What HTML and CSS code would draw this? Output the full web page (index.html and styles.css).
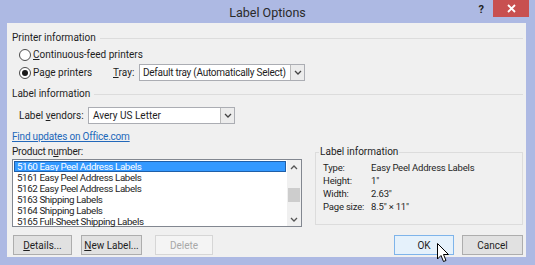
FILE: index.html
```html
<!DOCTYPE html>
<html>
<head>
<meta charset="utf-8">
<title>Label Options</title>
<link rel="stylesheet" href="styles.css">
</head>
<body>
<div class="window">
  <div class="titlebar">
    <div class="tb-side"></div>
    <div class="title">Label Options</div>
    <div class="tb-side tb-right">
      <span class="help">?</span>
      <span class="close"><svg width="9" height="9" viewBox="0 0 9 9"><path d="M1 1 L8 8 M8 1 L1 8" stroke="#fff" stroke-width="1.8" fill="none"/></svg></span>
    </div>
  </div>
  <div class="client">
    <div class="group-head"><span>Printer information</span><i class="rule"></i></div>
    <div class="radio-row r1"><span class="radio"></span><span><u>C</u>ontinuous-feed printers</span></div>
    <div class="radio-row r2">
      <span class="radio checked"></span><span class="page-lbl">Pa<u>g</u>e printers</span>
      <span class="tray-lbl"><u>T</u>ray:</span>
      <div class="select tray"><span class="sel-text">Default tray (Automatically Select)</span><span class="drop"><svg width="8" height="5" viewBox="0 0 8 5"><path d="M1 1 L4 4 L7 1" stroke="#444" stroke-width="1.3" fill="none"/></svg></span></div>
    </div>
    <div class="group-head gh2"><span>Label information</span><i class="rule"></i></div>
    <div class="vendor-row">
      <span class="vendor-lbl">Label <u>v</u>endors:</span>
      <div class="select vendor"><span class="sel-text">Avery US Letter</span><span class="drop"><svg width="8" height="5" viewBox="0 0 8 5"><path d="M1 1 L4 4 L7 1" stroke="#444" stroke-width="1.3" fill="none"/></svg></span></div>
    </div>
    <a class="link" href="#">Find updates on Office.com</a>
    <div class="main-row">
      <div class="product">
        <div class="prod-lbl">Product n<u>u</u>mber:</div>
        <div class="listbox">
          <div class="items">
            <div class="item sel">5160 Easy Peel Address Labels</div>
            <div class="item">5161 Easy Peel Address Labels</div>
            <div class="item">5162 Easy Peel Address Labels</div>
            <div class="item">5163 Shipping Labels</div>
            <div class="item">5164 Shipping Labels</div>
            <div class="item">5165 Full-Sheet Shipping Labels</div>
          </div>
          <div class="scrollbar">
            <span class="arrow"><svg width="8" height="5" viewBox="0 0 8 5"><path d="M1 4 L4 1 L7 4" stroke="#555" stroke-width="1.3" fill="none"/></svg></span>
            <span class="track"><span class="thumb"></span></span>
            <span class="arrow"><svg width="8" height="5" viewBox="0 0 8 5"><path d="M1 1 L4 4 L7 1" stroke="#555" stroke-width="1.3" fill="none"/></svg></span>
          </div>
        </div>
      </div>
      <fieldset class="info">
        <legend>Label information</legend>
        <div class="info-grid">
          <span>Type:</span><span>Easy Peel Address Labels</span>
          <span>Height:</span><span>1"</span>
          <span>Width:</span><span>2.63"</span>
          <span>Page size:</span><span>8.5" × 11"</span>
        </div>
      </fieldset>
    </div>
    <div class="buttons">
      <button class="btn b-details"><u>D</u>etails...</button>
      <button class="btn b-new"><u>N</u>ew Label...</button>
      <button class="btn b-delete" disabled>Delete</button>
      <span class="spacer"></span>
      <button class="btn b-ok">OK</button>
      <button class="btn b-cancel">Cancel</button>
    </div>
  </div>
  <svg class="cursor" width="13" height="20" viewBox="0 0 13 20"><path d="M0.5 0.5 L0.5 16 L4 12.5 L6.5 18.5 L9 17.5 L6.5 11.5 L11.5 11.5 Z" fill="#fff" stroke="#000" stroke-width="1"/></svg>
</div>
</body>
</html>
```

FILE: styles.css
```css
* { box-sizing: border-box; }
html, body { margin: 0; padding: 0; }
body {
  width: 535px;
  height: 265px;
  overflow: hidden;
  background: #adb9e3;
  font-family: Roboto, "Noto Sans", sans-serif;
  font-size: 10px;
  color: #1e1e1e;
  white-space: nowrap;
}
u { text-decoration: underline; text-underline-offset: 1px; }
.window {
  position: relative;
  height: 265px;
  display: flex;
  flex-direction: column;
}
.titlebar {
  height: 23px;
  display: grid;
  grid-template-columns: 1fr auto 1fr;
  align-items: start;
}
.title {
  font-size: 12.5px;
  line-height: 25px;
  color: #2a2a2a;
}
.tb-right {
  display: flex;
  justify-content: flex-end;
  align-items: flex-start;
  padding-right: 6px;
}
.help {
  font-weight: bold;
  font-size: 11px;
  line-height: 20px;
  color: #222;
  margin-right: 9px;
}
.close {
  width: 36px;
  height: 17px;
  background: #c85050;
  display: flex;
  align-items: center;
  justify-content: center;
}
.client {
  flex: 1;
  margin: 0 9px 8px 7px;
  background: #f0f0f0;
  padding: 8px 3px 0 5px;
  display: flex;
  flex-direction: column;
}
.group-head {
  display: flex;
  align-items: center;
  height: 14px;
  line-height: 14px;
}
.group-head .rule {
  flex: 1;
  border-top: 1px solid #dcdcdc;
  margin-left: 4px;
}
.gh2 { margin-top: 6px; }
.radio-row {
  display: flex;
  align-items: center;
  padding-left: 7px;
}
.r1 { margin-top: 2px; height: 15px; }
.r2 { margin-top: 2px; height: 17px; }
.radio {
  width: 12px;
  height: 12px;
  border: 1px solid #4a4a4a;
  border-radius: 50%;
  background: #fff;
  margin-right: 2px;
  display: flex;
  align-items: center;
  justify-content: center;
}
.radio.checked::after {
  content: "";
  width: 6px;
  height: 6px;
  border-radius: 50%;
  background: #1a1a1a;
}
.page-lbl { width: 80px; }
.tray-lbl { width: 26px; }
.select {
  height: 17px;
  background: #fff;
  border: 1px solid #abadb3;
  display: flex;
  align-items: stretch;
}
.sel-text {
  flex: 1;
  padding-left: 4px;
  line-height: 15px;
  overflow: hidden;
}
.tray .sel-text { letter-spacing: -0.25px; padding-left: 3px; }
.drop {
  width: 14px;
  background: #ececec;
  border-left: 1px solid #b9b9b9;
  display: flex;
  align-items: center;
  justify-content: center;
}
.tray { width: 166px; }
.vendor-row {
  display: flex;
  align-items: center;
  margin-top: 6px;
  padding-left: 7px;
  height: 17px;
}
.vendor-lbl { width: 69px; }
.vendor { width: 147px; }
.link {
  margin-top: 6px;
  height: 14px;
  line-height: 14px;
  color: #2268ba;
  text-decoration: underline;
  align-self: flex-start;
  letter-spacing: -0.2px;
}
.main-row {
  margin-top: 1px;
  display: flex;
  align-items: flex-start;
}
.product { width: 293px; }
.prod-lbl { height: 14px; line-height: 14px; letter-spacing: -0.2px; }
.listbox {
  height: 68px;
  border: 1px solid #828790;
  background: #fff;
  display: flex;
}
.items { flex: 1; padding: 1px 1px 0 1px; }
.item {
  height: 11px;
  line-height: 11px;
  padding-left: 3px;
  font-size: 9.8px;
  letter-spacing: -0.4px;
}
.item.sel {
  background: #3399ff;
  color: #fff;
  outline: 1px solid #1f5fa8;
  outline-offset: -1px;
}
.scrollbar {
  width: 14px;
  background: #f0f0f0;
  display: flex;
  flex-direction: column;
}
.arrow {
  height: 14px;
  display: flex;
  align-items: center;
  justify-content: center;
}
.track { flex: 1; padding: 14px 1px 0 1px; }
.thumb {
  display: block;
  height: 14px;
  background: #cdcdcd;
}
.info {
  margin: 0 0 0 13px;
  padding: 0 0 0 3px;
  width: 210px;
  height: 80px;
  border: 1px solid #dcdcdc;
  min-width: 0;
}
.info legend {
  padding: 0 1px;
  line-height: 14px;
}
.info-grid {
  margin-top: 2px;
  padding-left: 4px;
  display: grid;
  grid-template-columns: 48px auto;
  grid-auto-rows: 13px;
  line-height: 13px;
  letter-spacing: -0.2px;
  font-size: 9.5px;
}
.buttons {
  margin-top: 8px;
  display: flex;
  padding-left: 1px;
}
.btn {
  height: 20px;
  font-family: inherit;
  font-size: 10px;
  color: #1e1e1e;
  background: #e1e1e1;
  border: 1px solid #adadad;
  padding: 0;
  white-space: nowrap;
}
.b-details { width: 59px; }
.b-new { width: 61px; margin-left: 9px; }
.b-delete {
  width: 58px;
  margin-left: 13px;
  background: #f4f4f4;
  border-color: #d6d6d6;
  color: #a8a8a8;
}
.spacer { flex: 1; }
.b-ok {
  width: 60px;
  background: #e5f1fb;
  border-color: #7eb4ea;
}
.b-cancel { width: 61px; margin-left: 8px; }
.cursor {
  position: absolute;
  left: 437px;
  top: 243px;
}
```
